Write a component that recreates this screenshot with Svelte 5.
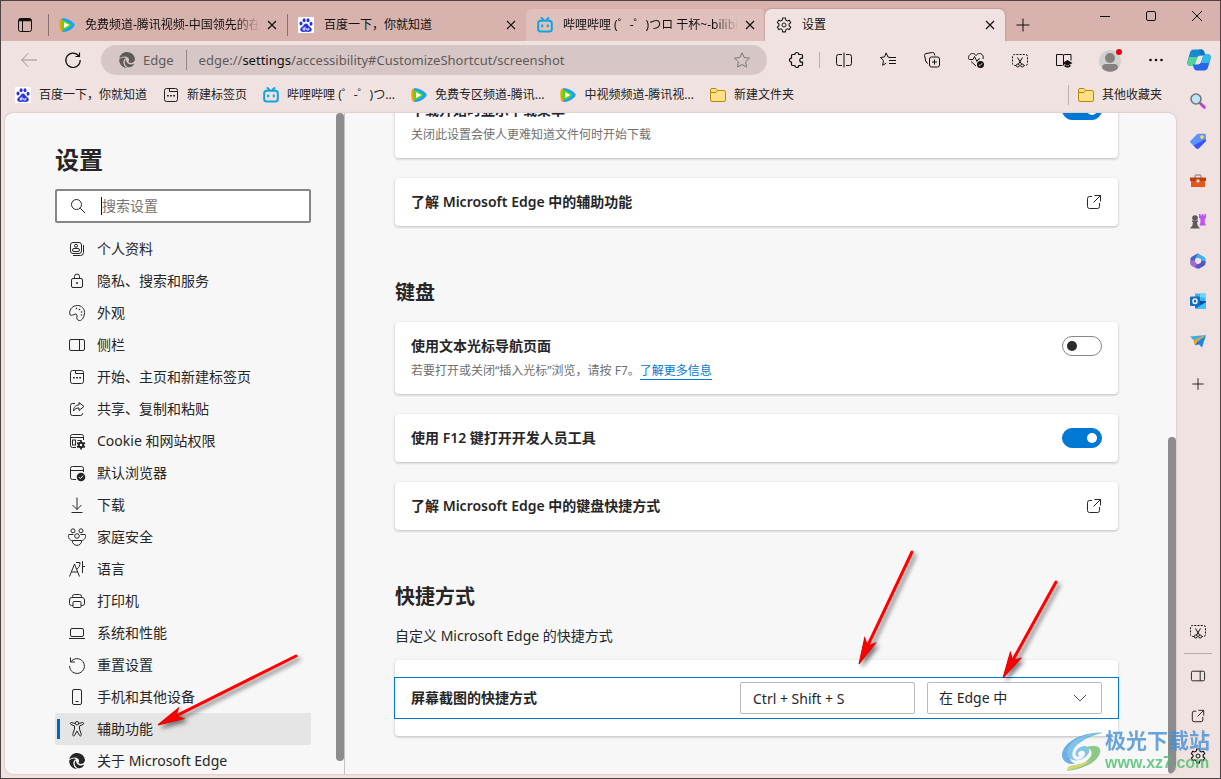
<script>
    let search = $state("");
    let shortcut = $state("Ctrl + Shift + S");
    let scope = $state("edge");
    let caretBrowsing = $state(false);
    let devTools = $state(true);
    let downloadMenu = $state(true);
    let active = $state("辅助功能");

    const edge = `<path fill="currentColor" stroke="none" d="M8 0a8 8 0 0 1 7.9 6.6C16.2 9.300 14.300 11 12 11c-1.700 0-2.600-.600-2.600-1.200 0-.500.700-.800.700-1.900C10.100 5.700 8 4.400 5.600 4.400 3.200 4.400 1.200 5.500.300 6.200 1 2.700 4.200 0 8 0z"/><path fill="currentColor" stroke="none" d="M.2 7.600C1.300 6.300 3.200 5.500 4.900 5.500c.900 0 1.700.200 2.300.600C5.400 6.800 4.300 8.500 4.300 10.300c0 2.500 1.600 4.700 3.900 5.700C3.700 16.100 0 12.500.2 7.600z"/><path fill="currentColor" stroke="none" d="M5.700 10.200c0-1.100.500-2.100 1.300-2.700.100 2.800 1.900 4.900 5 4.900 1 0 2-.300 2.800-.700.200-.100.400.100.300.300-.900 1.700-2.500 2.900-4.300 3.300-2.700.200-5.100-2.300-5.100-5.100z"/>`;
    const gear = `<path d="M6.700.7h2.600l.4 2 1.300.7 1.900-.7 1.300 2.300-1.500 1.300v1.500l1.500 1.300-1.300 2.300-1.900-.7-1.300.8-.4 2H6.700l-.4-2-1.300-.8-1.900.7-1.300-2.300 1.500-1.300V6.300L1.800 5l1.300-2.300 1.900.7 1.300-.7z" transform="translate(-.6 .3) scale(1.080)"/><circle cx="8" cy="8" r="2"/>`;
    const panel = `<rect x=".5" y="2.500" width="15" height="11" rx="1.500"/><path d="M10.500 2.500v11"/>`;
    const newTab = `<rect x="1.500" y="1.500" width="13" height="13" rx="2"/><path d="M6.500 2v2.500h8"/><path stroke-width="1.500" d="M4 8.800h1.800M7.100 8.800h1.800M10.200 8.800H12"/>`;
    const open = `<path d="M6 2.500H3.500a2 2 0 0 0-2 2v8a2 2 0 0 0 2 2h8a2 2 0 0 0 2-2V9M8.500 1.500h6v6M14.500 1.500l-7 7"/>`;
    const snip = `<path stroke-dasharray="2 1.200" d="M4 13.500H2.500a2 2 0 0 1-2-2v-7a2 2 0 0 1 2-2h11a2 2 0 0 1 2 2v7a2 2 0 0 1-2 2H12"/><path d="M5.500 5.500l4 6.500M10.500 5.500l-4 6.500"/><circle cx="5.800" cy="13.500" r="1.500"/><circle cx="10.200" cy="13.500" r="1.500"/>`;
    const paw = `<rect width="16" height="16" rx="1" fill="#fff" stroke="none"/><g fill="#2a32df" stroke="none"><ellipse cx="3" cy="6.500" rx="1.500" ry="2"/><ellipse cx="6.100" cy="3.300" rx="1.500" ry="2"/><ellipse cx="10" cy="3.300" rx="1.500" ry="2"/><ellipse cx="13" cy="6.700" rx="1.500" ry="2"/><path d="M8 6.500c-1.600 0-2 1.700-3.400 2.900C3.200 10.600 2 11.300 2.300 13c.4 2.100 2.600 2 5.700 1.800 3.100.2 5.300.3 5.700-1.800.3-1.700-.9-2.400-2.300-3.600C10 8.200 9.600 6.500 8 6.500z"/></g><path stroke="#fff" stroke-width=".9" d="M7 9.800V13H5.200v-1.900H7M8.800 11v2h2v-2.200"/>`;
    const tencent = `<path fill="#ff9d14" stroke="none" d="M.4 4.500C.6 1.700 2.700.8 5 1.500l2 13C3.900 15.500 1.500 15.300.8 12.500.3 10 .2 7 .4 4.500z"/><path fill="#17a3ff" stroke="none" d="M3 1.500c4-.8 9.500 2.200 12 5 .8 1 .8 2 0 3-2.500 3-7.800 6-11.500 5.300z"/><path fill="#63d60b" stroke="none" d="M2.500 3.800C4.500 2.600 10 5.500 12.200 8 10 10.800 4.800 13.500 2.900 12.300 2 11.500 1.700 4.500 2.500 3.800z"/><path fill="#fff" stroke="none" d="M5 5.300L10.300 8 5 10.900z"/>`;
    const bili = `<g stroke="#10a5dc" stroke-width="2"><path d="M4.500 1l2 2M11.500 1l-2 2" stroke-linecap="round"/><rect x="1.200" y="3.800" width="13.600" height="10.600" rx="2.500"/><path d="M5.200 7.500v2.800M10.800 7.500v2.800"/></g>`;
    const folder = `<path fill="#ffe082" stroke="#b98808" d="M.5 3a1.500 1.500 0 0 1 1.500-1.500h3.800l1.800 2H14A1.500 1.500 0 0 1 15.500 5v8a1.500 1.500 0 0 1-1.500 1.500H2A1.500 1.500 0 0 1 .5 13z"/><path stroke="#b98808" d="M.5 5.500h5.300l1.800-2"/>`;

    const icons = {
        edge, gear, panel, newTab, open, snip, paw, tencent, bili, folder,
        workspace: `<rect x="1.500" y="1.500" width="13" height="13" rx="2"/><path stroke-width="2.500" d="M2 3h12"/><path d="M5.500 4v10"/>`,
        close: `<path stroke-width="1.200" d="M4 4l8 8M12 4l-8 8"/>`,
        plus: `<path d="M8 1.500v13M1.500 8h13"/>`,
        minimize: `<path d="M3 8.500h10"/>`,
        maximize: `<rect x="3.500" y="3.500" width="9" height="9" rx="1.500"/>`,
        winClose: `<path d="M3 3l10 10M13 3L3 13"/>`,
        back: `<path d="M7 1.500L.8 8 7 14.500M.8 8H16"/>`,
        reload: `<path stroke-width="1.200" d="M13.800 4A7.200 7.200 0 1 0 15.200 8M14.500.500v4h-4"/>`,
        star: `<path d="M8 .800l2.200 4.700 5.200.700-3.800 3.600.9 5.200L8 12.500 3.500 15l.9-5.200L.600 6.200l5.200-.700z"/>`,
        puzzle: `<path stroke-width="1.200" d="M4.500 2.500h2.300a2 2 0 0 1 4 0h2.700a1 1 0 0 1 1 1v2.700h-.700a2 2 0 0 0 0 4h.700v2.300a1 1 0 0 1-1 1h-2.700a2 2 0 0 1-4 0H4.500a1 1 0 0 1-1-1v-2.300a2 2 0 0 1 0-4V3.500a1 1 0 0 1 1-1z"/>`,
        split: `<path d="M6 2.500H2.500a2 2 0 0 0-2 2v7a2 2 0 0 0 2 2H6M8 .500v15M10 2.500h3.500a2 2 0 0 1 2 2v7a2 2 0 0 1-2 2H10"/>`,
        favorites: `<path d="M10 5.500L7.900 5 6.200.900 4.400 5 .500 5.500l3 3.200-.9 4.600 3.600-2.100M9 5.500h7M9 8.500h7M9 11.500h7"/>`,
        collections: `<path d="M4 11.500L2 10 .500 3.500a2 2 0 0 1 1.500-2L8.500.500a2 2 0 0 1 2 1.500l.3 1.500"/><rect x="5.500" y="5" width="10" height="10" rx="2"/><path d="M10.500 7.500v5M8 10h5"/>`,
        health: `<path d="M3 9.500L8 14M1 7.500C-.5 4.500 2 1.500 4.500 1.500 6 1.500 7 2 8 3.500 9 2 10 1.500 11.500 1.500c2.500 0 4.500 2.500 3.500 5.500M1.500 7.500H5l1.500-3 2.500 5L10.500 7H12"/><circle cx="12.500" cy="12.500" r="3.500" fill="currentColor" stroke="none"/><path stroke="#f0e2e0" d="M10.800 12.500l1.200 1.200 2.200-2.400"/>`,
        reader: `<path d="M7.500 2.500v11M7.500 3.500a2 2 0 0 0-1.500-1H.500v11h6M7.500 3.500a2 2 0 0 1 1.500-1h6v6"/><path fill="currentColor" stroke="none" d="M6.500 11L11.500 8l5 3-5 2.800z"/><path fill="currentColor" stroke="none" d="M8.500 12.500v2c2 1.500 4 1.500 6 0v-2l-3 1.800z"/>`,
        dots: `<g fill="currentColor" stroke="none"><circle cx="2.500" cy="8" r="1.300"/><circle cx="8" cy="8" r="1.300"/><circle cx="13.500" cy="8" r="1.300"/></g>`,
        search: `<circle cx="6.500" cy="6.500" r="5"/><path d="M10.200 10.200l4.800 4.800"/>`,
        profile: `<rect x="1.500" y="1.500" width="11" height="11" rx="2.500"/><circle cx="7" cy="4.800" r="1.500"/><rect x="3.500" y="7.500" width="7" height="3" rx="1.500"/><path d="M4 14.500h7.500a3 3 0 0 0 3-3V4"/>`,
        lock: `<rect x="2.500" y="5.500" width="11" height="9" rx="1.500"/><path d="M5.500 5.500v-2a2.500 2.500 0 0 1 5 0v2"/><circle cx="8" cy="10" r="1" fill="currentColor" stroke="none"/>`,
        palette: `<path d="M.800 9C0 4 4 .500 8.500.500c4 0 7 3 7 7 0 4-2 8-5 8-2.500 0-3-2-2.500-4C8.500 9 6.500 8.500 5 9.500 3 10.500 1.300 11 .8 9z"/><g fill="currentColor" stroke="none"><circle cx="7.500" cy="3.500" r=".800"/><circle cx="10.500" cy="4.500" r=".800"/><circle cx="12.500" cy="7" r=".800"/><circle cx="12.500" cy="10" r=".800"/></g>`,
        share: `<path d="M6 2.500H3.500a2 2 0 0 0-2 2v8a2 2 0 0 0 2 2h8a2 2 0 0 0 2-2V12M10 1.500L15 5.500l-5 4v-2.500c-3 0-4.500 1-5.500 3 0-3.500 2-6 5.500-6z"/>`,
        cookie: `<path d="M7 14.500H3.500a2 2 0 0 1-2-2v-9a2 2 0 0 1 2-2h9a2 2 0 0 1 2 2V7M1.500 4.500h13M8.500 7.500h4"/><rect x="3.500" y="7" width="3" height="5"/><circle cx="12" cy="12" r="2.300" stroke-width="2"/><path stroke-width="1.800" d="M12 7.500v2M12 14.500v2M8.100 9.700l1.700 1M14.200 13.300l1.700 1M8.100 14.300l1.700-1M14.200 10.700l1.700-1"/>`,
        browser: `<path d="M7 14.500H3.500a2 2 0 0 1-2-2v-9a2 2 0 0 1 2-2h9a2 2 0 0 1 2 2V7M1.500 5.500h13"/><circle cx="12" cy="12" r="4.300" fill="currentColor" stroke="none"/><path stroke="#f7f7f7" d="M9.800 12l1.600 1.600 2.800-3"/>`,
        download: `<path d="M8 .500v12M3.500 8L8 12.500 12.500 8M2.500 15.500h11"/>`,
        family: `<circle cx="4" cy="1.800" r="2"/><circle cx="12" cy="1.800" r="2"/><circle cx="8" cy="7" r="2.300"/><path d="M4.500 5.500H-.200c-1.300 3 1 5.500 3 6M11.500 5.500h4.700c1.300 3-1 5.500-3 6M3.300 11.500h9.400c0 6.500-9.400 6.500-9.400 0z"/>`,
        language: `<path d="M.500 15.500L5.500 3l5 12.500M2.500 11h6M7 1.500h4c0 3-1 5-3 6.500M13.500 0v12M13.500 5.500H16"/>`,
        printer: `<path d="M4 12.500H2.500a2 2 0 0 1-2-2V7a2.500 2.500 0 0 1 2.500-2.500h10A2.500 2.500 0 0 1 15.500 7v3.500a2 2 0 0 1-2 2H12M3.500 4.500v-1a2 2 0 0 1 2-2h5a2 2 0 0 1 2 2v1"/><rect x="4" y="8.500" width="8" height="6" rx="1"/>`,
        laptop: `<rect x="1.500" y="3.500" width="13" height="8" rx="1.500"/><path d="M0 13.500h16"/>`,
        reset: `<path d="M1.500.500v4.500H6M1.800 5A7.400 7.400 0 1 1 .600 9"/>`,
        phone: `<rect x="3.500" y=".500" width="9" height="15" rx="1.500"/><path d="M6.500 12.500h3"/>`,
        accessibility: `<path d="M8 .500a1.700 1.700 0 0 1 1.600 2.200l3.700-1.200c1.400-.300 1.900 1.500.6 2L10.500 5v3l1.800 5.500c.3 1.500-1.400 2-2 .7L8 10l-2.300 4.200c-.6 1.300-2.300.8-2-.7L5.500 8V5L2.100 3.500c-1.300-.5-.8-2.300.6-2l3.700 1.200A1.700 1.700 0 0 1 8 .5zM6.300 3c.8 1.100 2.600 1.100 3.400 0"/>`,
        chevron: `<path d="M2 5l6 6 6-6"/>`,
        copilot: `<g stroke="none"><path fill="#158bd3" d="M4.500 1h5c1.200 0 1.800.9 2.100 2l.6 2H9C7 5 6.400 7 5.800 9l-1 3H2.500C.5 12-.1 10.500.3 9l1.700-6C2.400 1.700 3.200 1 4.500 1z"/><path fill="#50d49c" d="M1.500 6L.4 9.300C0 11 .800 12 2.500 12H5l2-6z"/><path fill="#2867e8" d="M11.500 15h-5c-1.200 0-1.800-.9-2.100-2l-.6-2H7c2 0 2.600-2 3.200-4l1-3h2.300c2 0 2.600 1.500 2.200 3L14 13c-.4 1.300-1.200 2-2.500 2z"/><path fill="#32b9ee" d="M11 4h2.500c2 0 2.600 1.500 2.200 3l-1 3H9.500z"/><path fill="#0878bf" d="M8 1h1.700c1 0 1.600.8 1.900 2l.4 1.500L9 5z"/></g>`,
        magnifier: `<path stroke="#c239e8" stroke-width="3" stroke-linecap="round" d="M11 11l3.300 3.300"/><path stroke="#777" stroke-width="2" d="M9.500 9.500l2 2"/><circle cx="6" cy="6" r="5" fill="#bfe3fa" stroke="#777" stroke-width="1.600"/>`,
        tag: `<path fill="#5b93ff" stroke="none" d="M7.500.700h7.300c.6 0 1 .400 1 1v6.500l-7.300 7.300c-.6.600-1.300.600-2 0L.6 9.700c-.7-.7-.7-1.400 0-2z"/><path fill="#3b55ee" stroke="none" d="M3.500 12.500L15.800 6v2.200l-7.300 7.300c-.6.600-1.300.600-2 0z"/><circle cx="12" cy="4" r="1.300" fill="#fff" stroke="#f8c928" stroke-width="1.300"/>`,
        toolbox: `<path stroke="#999" stroke-width="1.500" d="M5 5V3.500C5 2.500 5.500 2 6.500 2h3c1 0 1.500.5 1.500 1.500V5"/><path fill="#bf3f0f" stroke="none" d="M0 4.500h16V8H0z"/><path fill="#e2571d" stroke="none" d="M1 8h14v6H1z"/><path fill="#ddd" stroke="none" d="M6.500 6.500h3v2L8 10 6.500 8.500z"/>`,
        chess: `<g stroke="none"><path fill="#ba55f4" d="M9 1h1.500v1.500h1.200V1h1.600v1.500h1.200V1H16v4l-1.200 1v4l1.200 2.500H9.500L10.500 9V6L9 5z"/><g fill="#5b5b5b"><circle cx="5" cy="5" r="2.800"/><path d="M2 7.500h6V9H7l.6 3.500L10 15.500H0l2.400-3L3 9H2z"/></g></g>`,
        m365: `<g stroke="none"><path fill="#3f66c9" d="M7.500.5L1.800 3.800C.9 4.300.500 5 .5 6v5l4.500-2V6l5-4.300z"/><path fill="#a469d2" d="M.5 8v3c0 1 .4 1.500 1.300 2l5 2.700 4-3L6 10l-1-3z"/><path fill="#42b0ef" d="M8 .5l5.800 3.300c1 .6 1.700 1.200 1.700 2.200v4L11 8.500V6L6 4.500z"/><path fill="#5357c5" d="M15.500 8v2.500c0 1-.5 1.700-1.400 2.200L8.500 16 5 13l6-3.500V8z"/><circle cx="8" cy="8" r="2.600" fill="#f0e2e0"/></g>`,
        outlook: `<g stroke="none"><path fill="#37b6ec" d="M5 .5h10.500V8H5z"/><path fill="#0f78d4" d="M5 8h11v7.500H5z"/><path fill="#73d5fb" d="M10 .500h5.500v4H10z"/><path fill="#0a4b9f" d="M5 8l11 6V8z"/><path fill="#3cc5f4" d="M6 15.500L16 9v6.500z"/><rect y="3.500" width="10" height="9.500" rx="1" fill="#0f6fc5"/></g><ellipse cx="5" cy="8.200" rx="2" ry="2.300" stroke="#fff" stroke-width="1.400"/>`,
        plane: `<g stroke="none"><path fill="#35aef0" d="M0 3.500L16 2 5 8.500z"/><path fill="#1e86e5" d="M16 2l-4 12.500L6.500 9z"/><path fill="#f6a21a" d="M16 2L3.500 7l1 5.500 2.500-4z"/><path fill="#176ad2" d="M5 12.500L7 9l2.500 2z"/></g>`,
    };

    const tabs = [
        { icon: "tencent", title: "免费频道-腾讯视频-中国领先的在线视频", fade: true },
        { icon: "paw", title: "百度一下，你就知道" },
        { icon: "bili", title: "哔哩哔哩 (゜-゜)つロ 干杯~-bilibili", fade: true, hover: true },
        { icon: "gear", title: "设置", current: true },
    ];

    const toolbar = [
        ["split", "拆分屏幕"],
        ["favorites", "收藏夹"],
        ["collections", "集锦"],
        ["health", "浏览器概要"],
        ["snip", "网页捕获"],
        ["reader", "阅读"],
    ];

    const bookmarks = [
        ["paw", "百度一下，你就知道"],
        ["newTab", "新建标签页"],
        ["bili", "哔哩哔哩 (゜-゜)つ..."],
        ["tencent", "免费专区频道-腾讯..."],
        ["tencent", "中视频频道-腾讯视..."],
        ["folder", "新建文件夹"],
    ];

    const menu = [
        ["profile", "个人资料"],
        ["lock", "隐私、搜索和服务"],
        ["palette", "外观"],
        ["panel", "侧栏"],
        ["newTab", "开始、主页和新建标签页"],
        ["share", "共享、复制和粘贴"],
        ["cookie", "Cookie 和网站权限"],
        ["browser", "默认浏览器"],
        ["download", "下载"],
        ["family", "家庭安全"],
        ["language", "语言"],
        ["printer", "打印机"],
        ["laptop", "系统和性能"],
        ["reset", "重置设置"],
        ["phone", "手机和其他设备"],
        ["accessibility", "辅助功能"],
        ["edge", "关于 Microsoft Edge"],
    ];

    const apps = [
        ["magnifier", "搜索"],
        ["tag", "购物"],
        ["toolbox", "工具"],
        ["chess", "游戏"],
        ["m365", "Microsoft 365"],
        ["outlook", "Outlook"],
        ["plane", "Drop"],
    ];

    // tail and tip of each pointer
    const arrows = [
        [296, 656, 158, 725],
        [912, 552, 859, 664],
        [1056, 582, 1003, 678],
    ];

    function arrowTransform([x1, y1, x2, y2]) {
        const angle = (Math.atan2(y2 - y1, x2 - x1) * 180) / Math.PI;
        return `translate(${x2} ${y2}) rotate(${angle})`;
    }

    function arrowLength([x1, y1, x2, y2]) {
        return Math.hypot(x2 - x1, y2 - y1);
    }
</script>

{#snippet icon(name, size = 16)}
    <svg class="icon" width={size} height={size} viewBox="0 0 16 16" aria-hidden="true">
        {@html icons[name]}
    </svg>
{/snippet}

<div class="window">
    <header class="tabstrip">
        <button class="workspace" aria-label="标签页操作">{@render icon("workspace")}</button>
        {#each tabs as tab}
            <div class="tab" class:current={tab.current} class:hover={tab.hover}>
                {@render icon(tab.icon)}
                <button class="tab-title" class:fade={tab.fade}>{tab.title}</button>
                <button class="tab-close" aria-label="关闭标签页">{@render icon("close")}</button>
            </div>
        {/each}
        <button class="new-tab" aria-label="新建标签页">{@render icon("plus")}</button>
        <div class="window-buttons">
            <button aria-label="最小化">{@render icon("minimize")}</button>
            <button aria-label="最大化">{@render icon("maximize")}</button>
            <button aria-label="关闭">{@render icon("winClose")}</button>
        </div>
    </header>

    <div class="toolbar">
        <button class="tool muted" aria-label="返回">{@render icon("back")}</button>
        <button class="tool" aria-label="刷新">{@render icon("reload")}</button>
        <div class="address">
            {@render icon("edge")}
            <span class="site">Edge</span>
            <span class="url">edge://<b>settings</b>/accessibility#CustomizeShortcut/screenshot</span>
            <button aria-label="收藏此页">{@render icon("star")}</button>
        </div>
        <button class="tool" aria-label="扩展">{@render icon("puzzle")}</button>
        <span class="divider"></span>
        {#each toolbar as [name, label]}
            <button class="tool" aria-label={label}>{@render icon(name)}</button>
        {/each}
        <button class="tool account" aria-label="个人资料">
            <svg width="26" height="26" viewBox="0 0 26 26" aria-hidden="true">
                <circle cx="13" cy="14" r="11" fill="#d2d0ce" />
                <circle cx="13" cy="11" r="5" fill="#85817e" />
                <path fill="#85817e" d="M5 21c0-4 3-4 4-4h8c1 0 4 0 4 4-4 5-12 5-16 0z" />
                <circle cx="22" cy="5" r="3" fill="#e8000b" />
            </svg>
        </button>
        <button class="tool" aria-label="设置及其他">{@render icon("dots")}</button>
        <button class="tool copilot" aria-label="Copilot">{@render icon("copilot", 24)}</button>
    </div>

    <div class="body">
        <div class="left">
            <nav class="bookmarks" aria-label="收藏夹栏">
                {#each bookmarks as [name, label]}
                    <a href="#top">{@render icon(name)}<span>{label}</span></a>
                {/each}
                <a href="#top" class="other">{@render icon("folder")}<span>其他收藏夹</span></a>
            </nav>

            <div class="page">
                <aside class="settings-nav">
                    <h1>设置</h1>
                    <label class="search">
                        {@render icon("search")}
                        <span class="caret"></span>
                        <input type="text" placeholder="搜索设置" aria-label="搜索设置" bind:value={search} />
                    </label>
                    <ul>
                        {#each menu as [name, label]}
                            <li>
                                <a href="#top" class:active={active === label} onclick={() => (active = label)}>
                                    {@render icon(name)}{label}
                                </a>
                            </li>
                        {/each}
                    </ul>
                </aside>
                <div class="scrollbar nav-scrollbar"><span></span></div>

                <main>
                    <div class="scrolled">
                        <section class="card">
                            <div>
                                <label class="title" for="download-menu">下载开始时显示下载菜单</label>
                                <p>关闭此设置会使人更难知道文件何时开始下载</p>
                            </div>
                            <input id="download-menu" class="toggle" type="checkbox" bind:checked={downloadMenu} />
                        </section>
                        <a class="card" href="#top">
                            <span class="title">了解 Microsoft Edge 中的辅助功能</span>
                            {@render icon("open")}
                        </a>

                        <h2>键盘</h2>
                        <section class="card">
                            <div>
                                <label class="title" for="caret-browsing">使用文本光标导航页面</label>
                                <p>若要打开或关闭“插入光标”浏览，请按 F7。<a href="#top">了解更多信息</a></p>
                            </div>
                            <input id="caret-browsing" class="toggle" type="checkbox" bind:checked={caretBrowsing} />
                        </section>
                        <section class="card">
                            <label class="title" for="dev-tools">使用 F12 键打开开发人员工具</label>
                            <input id="dev-tools" class="toggle" type="checkbox" bind:checked={devTools} />
                        </section>
                        <a class="card" href="#top">
                            <span class="title">了解 Microsoft Edge 中的键盘快捷方式</span>
                            {@render icon("open")}
                        </a>

                        <h2>快捷方式</h2>
                        <p class="subtitle">自定义 Microsoft Edge 的快捷方式</p>
                        <section class="card shortcuts">
                            <div class="shortcut-row">
                                <label class="title" for="shortcut">屏幕截图的快捷方式</label>
                                <input id="shortcut" class="field" type="text" bind:value={shortcut} />
                                <div class="select">
                                    <select class="field" aria-label="范围" bind:value={scope}>
                                        <option value="edge">在 Edge 中</option>
                                        <option value="global">全局</option>
                                    </select>
                                    {@render icon("chevron")}
                                </div>
                            </div>
                        </section>
                    </div>
                </main>
                <div class="scrollbar page-scrollbar"><span></span></div>
            </div>
        </div>

        <aside class="apps">
            {#each apps as [name, label]}
                <button aria-label={label}>{@render icon(name)}</button>
            {/each}
            <button class="add" aria-label="自定义">{@render icon("plus", 14)}</button>
            <span class="space"></span>
            <button aria-label="屏幕截图">{@render icon("snip")}</button>
            <hr />
            <button aria-label="隐藏侧栏">{@render icon("panel", 14)}</button>
            <button aria-label="在新窗口中打开">{@render icon("open", 14)}</button>
            <button aria-label="侧栏设置">{@render icon("gear")}</button>
        </aside>
    </div>

    <svg class="arrows" width="1221" height="779" aria-hidden="true">
        {#each arrows as arrow}
            <g transform={arrowTransform(arrow)}>
                <path d="M{-arrowLength(arrow)} 0H-22" stroke="#f00" stroke-width="3" stroke-linecap="round" />
                <path d="M0 0L-26 -6L-20 0L-26 6Z" fill="#f00" stroke="#d00" />
            </g>
        {/each}
    </svg>

    <div class="watermark">
        <svg width="44" height="42" viewBox="0 0 46 42" aria-hidden="true">
            <path fill="#4e9fe0" d="M44 1C24-1 2 10 1 24c0 7 7 11 14 9C5 31 9 18 20 11 27 6 35 3 44 1z" />
            <path fill="#65b8e6" d="M43 1C28 3 14 12 12 22c-1 6 4 9 9 6 7-4 4-10-1-8-3 2-3 5 0 5-6 3-7-5 0-9 8-4 13 3 7 9-8 8-22 6-20-5C9 8 27 1 43 1z" />
            <path fill="#75bd6a" d="M26 16c7-2 16-2 15 5-1 9-16 18-36 20 16-6 27-12 27-19 0-3-2-5-6-6z" />
            <path fill="#c9cf55" d="M6 40c9-1 19-5 25-10-8 3-15 4-23 6z" />
        </svg>
        <div>
            <strong>极光下载站</strong>
            <span>www.xz7.com</span>
        </div>
    </div>
</div>

<style>
    :global(body) {
        margin: 0;
        overflow: hidden;
    }

    .window {
        position: relative;
        box-sizing: border-box;
        display: flex;
        flex-direction: column;
        height: 100vh;
        border: 1px solid #4d4345;
        background: #f0e2e0;
        color: #262626;
        font-family: "Noto Sans", "Noto Sans CJK SC", sans-serif;
        font-size: 14px;
        line-height: 20px;
    }

    .window * {
        box-sizing: border-box;
    }

    button {
        display: flex;
        align-items: center;
        justify-content: center;
        padding: 0;
        border: none;
        background: none;
        color: #111;
        font: inherit;
    }

    a {
        color: inherit;
        text-decoration: none;
    }

    .icon {
        flex: none;
        overflow: visible;
        fill: none;
        stroke: currentColor;
    }

    /* tab strip */
    .tabstrip {
        display: flex;
        align-items: flex-end;
        height: 40px;
        background: #d8b2ac;
        font-size: 12px;
    }

    .workspace {
        width: 47px;
        height: 32px;
    }

    .tab {
        display: flex;
        flex: 0 1 239px;
        align-items: center;
        min-width: 0;
        height: 32px;
        padding: 0 7px 0 10px;
        border-left: 1px solid transparent;
        color: #222;
    }

    .tab:nth-of-type(-n + 2) {
        border-image: linear-gradient(transparent 6px, #8c6f6c 6px, #8c6f6c 26px, transparent 26px) 1;
        border-right: 0;
    }

    .tab.hover {
        border-radius: 6px 6px 0 0;
        background: #dfc0bc;
    }

    .tab.current {
        flex-basis: 240px;
        border-radius: 6px 6px 0 0;
        background: #f0e2e0;
        box-shadow: 0 0 2px rgba(90, 40, 40, 0.5);
        clip-path: inset(-3px -3px 0 -3px);
    }

    .tab-title {
        flex: 1;
        justify-content: flex-start;
        min-width: 0;
        margin-left: 10px;
        overflow: hidden;
        white-space: nowrap;
    }

    .tab-title.fade {
        mask-image: linear-gradient(to right, #000 86%, transparent);
    }

    .tab-close {
        margin-left: 4px;
    }

    .new-tab {
        width: 35px;
        height: 32px;
    }

    .window-buttons {
        display: flex;
        align-self: flex-start;
        margin-left: auto;
    }

    .window-buttons button {
        width: 46px;
        height: 30px;
    }

    /* toolbar */
    .toolbar {
        display: flex;
        align-items: center;
        height: 38px;
        padding-left: 6px;
    }

    .tool {
        flex: none;
        width: 44px;
        height: 30px;
    }

    .tool.muted {
        color: #9b9190;
    }

    .tool.account {
        width: 48px;
    }

    .tool.copilot {
        width: 42px;
    }

    .address {
        display: flex;
        flex: 1;
        align-items: center;
        height: 30px;
        min-width: 0;
        margin: 0 7px 0 6px;
        padding: 0 17px 0 18px;
        border-radius: 15px;
        background: #d6c7c6;
        color: #5f5a59;
        font-size: 13px;
    }

    .address button {
        color: #777;
    }

    .site {
        margin-left: 8px;
        padding-right: 12px;
        border-right: 1px solid #918786;
    }

    .url {
        flex: 1;
        min-width: 0;
        margin-left: 12px;
        overflow: hidden;
        white-space: nowrap;
    }

    .url b {
        color: #111;
        font-weight: 400;
    }

    .divider {
        width: 1px;
        height: 16px;
        margin: 0 2px 0 1px;
        background: #bdaeac;
    }

    /* below the toolbar */
    .body {
        display: flex;
        flex: 1;
        min-height: 0;
    }

    .left {
        display: flex;
        flex: 1;
        flex-direction: column;
        min-width: 0;
        padding: 0 0 4px 4px;
    }

    .bookmarks {
        display: flex;
        align-items: center;
        height: 34px;
        padding: 0 14px 2px 10px;
        gap: 16px;
        color: #222;
        font-size: 12px;
    }

    .bookmarks a {
        display: flex;
        align-items: center;
        gap: 8px;
        white-space: nowrap;
    }

    .bookmarks .other {
        margin-left: auto;
        padding-left: 9px;
        border-left: 1px solid #bdaeac;
    }

    .page {
        display: flex;
        flex: 1;
        min-height: 0;
        overflow: hidden;
        border-radius: 8px;
        background: #f7f7f7;
        box-shadow: 0 0 2px rgba(120, 70, 70, 0.4);
    }

    .settings-nav {
        width: 331px;
        padding: 31px 25px 0 50px;
        overflow: hidden;
    }

    h1 {
        margin: 0;
        font-size: 24px;
        line-height: 32px;
    }

    .search {
        display: flex;
        align-items: center;
        height: 34px;
        margin-top: 13px;
        padding-left: 13px;
        border: 2px solid #868686;
        border-radius: 2px;
        background: #fff;
    }

    .caret {
        width: 1px;
        height: 18px;
        margin-left: 15px;
        background: #111;
    }

    .search input {
        flex: 1;
        min-width: 0;
        padding: 0;
        border: none;
        outline: none;
        background: none;
        font: inherit;
    }

    .search input::placeholder {
        color: #757575;
    }

    ul {
        margin: 10px 0 0;
        padding: 0;
        list-style: none;
    }

    li a {
        display: flex;
        align-items: center;
        gap: 12px;
        height: 32px;
        padding-left: 14px;
        border-radius: 2px;
    }

    li a.active {
        background:
            linear-gradient(#0067c0, #0067c0) 2px center / 3px 20px no-repeat,
            #e5e5e5;
    }

    .scrollbar {
        display: flex;
        flex: none;
        flex-direction: column;
    }

    .scrollbar span {
        width: 8px;
        border-radius: 4px;
        background: #8c8c8c;
    }

    .nav-scrollbar {
        border-right: 1px solid #c4c4c4;
    }

    .nav-scrollbar span {
        height: 98%;
    }

    .page-scrollbar {
        justify-content: flex-end;
    }

    .page-scrollbar span {
        height: 51%;
    }

    /* settings content */
    main {
        flex: 1;
        min-width: 0;
        overflow: hidden;
    }

    .scrolled {
        margin-top: -27px;
        padding: 0 50px;
    }

    .card {
        display: flex;
        align-items: flex-start;
        justify-content: space-between;
        margin-bottom: 20px;
        padding: 14px 16px;
        border-radius: 4px;
        background: #fff;
        box-shadow: 0 1px 3px rgba(0, 0, 0, 0.25);
    }

    a.card {
        align-items: center;
    }

    .title {
        display: block;
        font-weight: 600;
    }

    .card p {
        margin: 6px 0 0;
        color: #707070;
        font-size: 12px;
        line-height: 18px;
    }

    .card p a {
        border-bottom: 1px solid #0078d4;
        color: #0078d4;
    }

    h2 {
        margin: 53px 0 15px;
        font-size: 20px;
        line-height: 28px;
    }

    .subtitle {
        margin: 0 0 14px;
    }

    .toggle {
        appearance: none;
        display: flex;
        align-items: center;
        width: 40px;
        height: 20px;
        margin: 0;
        padding: 0 4px;
        border: 1px solid #868686;
        border-radius: 10px;
        background: #fff;
    }

    .toggle::before {
        content: "";
        width: 10px;
        height: 10px;
        border-radius: 50%;
        background: #2b2b2b;
    }

    .toggle:checked {
        justify-content: flex-end;
        border-color: #0078d4;
        background: #0078d4;
    }

    .toggle:checked::before {
        background: #fff;
    }

    .card.shortcuts {
        display: block;
        padding: 17px 0;
    }

    .shortcut-row {
        display: flex;
        align-items: center;
        gap: 12px;
        height: 42px;
        margin: 0 -1px;
        padding: 0 16px;
        border: 1px solid #0078d4;
    }

    .shortcut-row .title {
        flex: 1;
    }

    .field {
        appearance: none;
        width: 175px;
        height: 32px;
        padding: 0 12px;
        border: 1px solid #bababa;
        border-radius: 2px;
        background: #fff;
        color: inherit;
        font: inherit;
    }

    select.field {
        padding: 0 11px;
    }

    .select {
        display: grid;
        align-items: center;
    }

    .select > :global(*) {
        grid-area: 1 / 1;
    }

    .select .icon {
        justify-self: end;
        margin-right: 14px;
        color: #555;
        pointer-events: none;
    }

    /* app sidebar */
    .apps {
        display: flex;
        flex-direction: column;
        align-items: center;
        width: 44px;
        padding: 2px 0;
    }

    .apps button {
        width: 40px;
        height: 40px;
    }

    .apps .add {
        margin-top: 3px;
    }

    .apps .space {
        flex: 1;
    }

    .apps hr {
        width: 28px;
        margin: 2px 0;
        border: none;
        border-top: 1px solid #b9aaa8;
    }

    .arrows {
        position: absolute;
        top: -1px;
        left: -1px;
        fill: none;
        pointer-events: none;
        filter: drop-shadow(3px 3px 2px rgba(0, 0, 0, 0.5));
    }

    .watermark {
        position: absolute;
        right: 10px;
        bottom: 4px;
        display: flex;
        align-items: center;
        opacity: 0.8;
        pointer-events: none;
    }

    .watermark strong,
    .watermark span {
        display: block;
        line-height: 22px;
        font-family: "Liberation Sans", "Noto Sans CJK SC", sans-serif;
    }

    .watermark strong {
        color: #468fd5;
        font-size: 21px;
    }

    .watermark span {
        color: #4fbd72;
        font-size: 16px;
        font-weight: 700;
    }
</style>
